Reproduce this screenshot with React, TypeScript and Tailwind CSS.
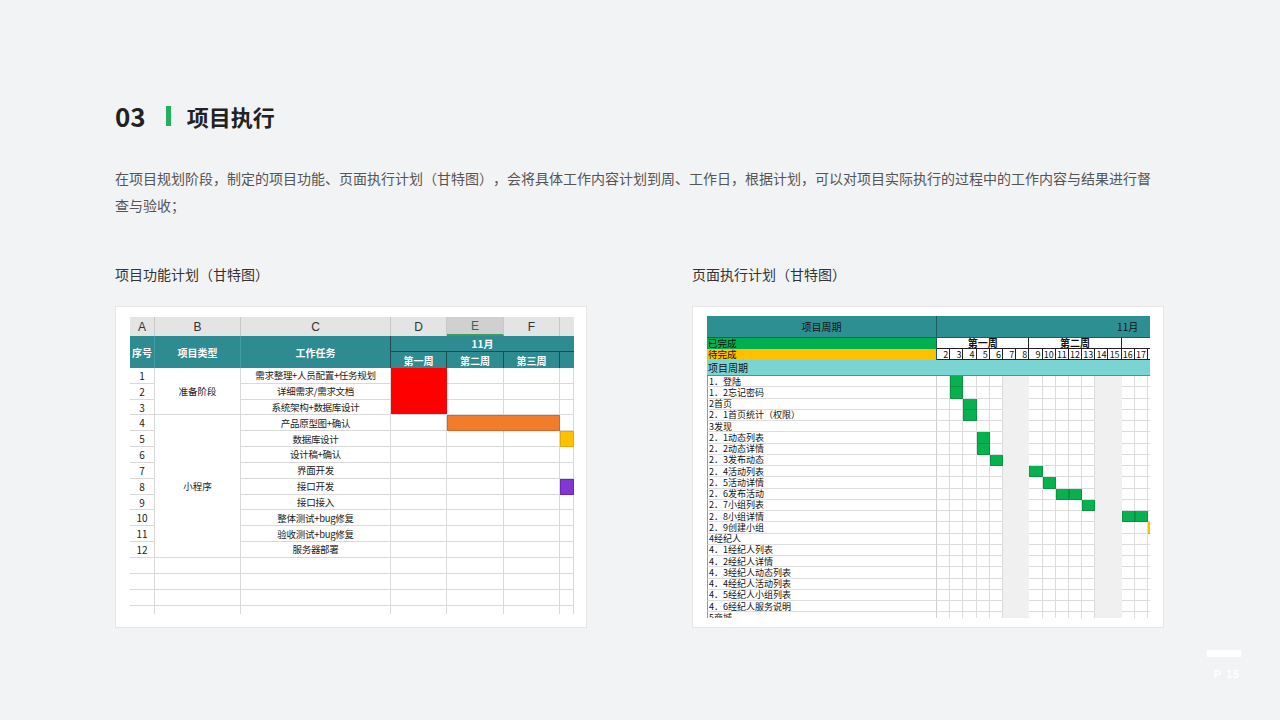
import React from 'react';

const tasks = [
  '需求整理+人员配置+任务规划',
  '详细需求/需求文档',
  '系统架构+数据库设计',
  '产品原型图+确认',
  '数据库设计',
  '设计稿+确认',
  '界面开发',
  '接口开发',
  '接口接入',
  '整体测试+bug修复',
  '验收测试+bug修复',
  '服务器部署',
];

const pages = [
  '1．登陆',
  '1．2忘记密码',
  '2首页',
  '2．1首页统计（权限）',
  '3发现',
  '2．1动态列表',
  '2．2动态详情',
  '2．3发布动态',
  '2．4活动列表',
  '2．5活动详情',
  '2．6发布活动',
  '2．7小组列表',
  '2．8小组详情',
  '2．9创建小组',
  '4经纪人',
  '4．1经纪人列表',
  '4．2经纪人详情',
  '4．3经纪人动态列表',
  '4．4经纪人活动列表',
  '4．5经纪人小组列表',
  '4．6经纪人服务说明',
  '5商城',
];

const days = [2, 3, 4, 5, 6, 7, 8, 9, 10, 11, 12, 13, 14, 15, 16, 17, 18];
const weekend = [7, 8, 14, 15];
const doneBars: Record<number, number[]> = {
  0: [3],
  1: [3],
  2: [4],
  3: [4],
  5: [5],
  6: [5],
  7: [6],
  8: [9],
  9: [10],
  10: [11, 12],
  11: [13],
  12: [16, 17],
};
const todoBars: Record<number, number[]> = { 13: [18] };

const cell = 'border-r border-b border-[#d9d9d9] bg-white';

const LeftSheet = () => {
  const rowCell = (i: number) => {
    const row = i + 1;
    const out: React.ReactNode[] = [];
    out.push(
      <div key={`a${row}`} className={`${cell} flex items-center justify-center text-[10px] text-[#222]`}>
        {row}
      </div>,
    );
    if (row === 1)
      out.push(
        <div key="b1" className={`${cell} row-span-3 flex items-center justify-center text-[9.5px] text-[#222]`}>
          准备阶段
        </div>,
      );
    if (row === 4)
      out.push(
        <div key="b4" className={`${cell} row-span-9 flex items-center justify-center text-[9.5px] text-[#222]`}>
          小程序
        </div>,
      );
    out.push(
      <div
        key={`c${row}`}
        className={`${cell} flex items-center justify-center whitespace-nowrap text-[9.5px] tracking-[-0.3px] text-[#222]`}
      >
        {tasks[i]}
      </div>,
    );
    if (row === 1) out.push(<div key="d1" className="row-span-3 border-b border-[#d9d9d9] bg-[#ff0000]" />);
    if (row > 3) out.push(<div key={`d${row}`} className={cell} />);
    if (row === 4) {
      out.push(<div key="ef4" className="col-span-2 border border-[#d8661c] bg-[#f07c2c]" />);
    } else {
      out.push(<div key={`e${row}`} className={cell} />);
      out.push(<div key={`f${row}`} className={cell} />);
    }
    if (row === 5) out.push(<div key="g5" className="border border-[#e5ab00] bg-[#ffc000]" />);
    else if (row === 8) out.push(<div key="g8" className="border border-[#6a28b4] bg-[#8236d4]" />);
    else out.push(<div key={`g${row}`} className={cell} />);
    return out;
  };

  return (
    <div className="h-[297px] w-[444px] overflow-hidden">
      <div className="grid grid-cols-[25px_86px_150px_56px_57px_56px_14px] grid-rows-[19px_16px_16px_repeat(12,15.83px)_repeat(4,16px)]">
        {['A', 'B', 'C', 'D'].map((l) => (
          <div
            key={l}
            className="flex items-center justify-center border-r border-[#c9c9c9] bg-[#e4e4e4] font-['Liberation_Sans',sans-serif] text-[12px] text-[#333]"
          >
            {l}
          </div>
        ))}
        <div className="flex items-center justify-center border-r border-b-2 border-[#c9c9c9] border-b-[#3f9b5c] bg-[#d0d0d0] font-['Liberation_Sans',sans-serif] text-[12px] text-[#217346]">
          E
        </div>
        <div className="flex items-center justify-center border-r border-[#c9c9c9] bg-[#e4e4e4] font-['Liberation_Sans',sans-serif] text-[12px] text-[#333]">
          F
        </div>
        <div className="bg-[#e4e4e4]" />

        <div className="row-span-2 flex items-center justify-center border-r border-[#3d9ea5] bg-[#2e8b92] text-[10px] font-bold text-white">
          序号
        </div>
        <div className="row-span-2 flex items-center justify-center border-r border-[#3d9ea5] bg-[#2e8b92] text-[10px] font-bold text-white">
          项目类型
        </div>
        <div className="row-span-2 flex items-center justify-center border-r border-[#1d4c50] bg-[#2e8b92] text-[10px] font-bold text-white">
          工作任务
        </div>
        <div className="col-span-4 flex items-center justify-center border-b border-[#1d4c50] bg-[#2e8b92] text-[10px] font-bold text-white">
          11月
        </div>
        {['第一周', '第二周', '第三周'].map((w) => (
          <div
            key={w}
            className="flex items-center justify-center border-r border-[#1d4c50] bg-[#2e8b92] text-[10px] font-bold text-white"
          >
            {w}
          </div>
        ))}
        <div className="bg-[#2e8b92]" />

        {tasks.map((_, i) => rowCell(i))}

        {[0, 1, 2, 3].map((r) =>
          [0, 1, 2, 3, 4, 5, 6].map((c) => <div key={`x${r}-${c}`} className={cell} />),
        )}
      </div>
    </div>
  );
};

const RightSheet = () => (
  <div className="h-[302px] w-[443px] overflow-hidden font-['Noto_Sans_CJK_SC',sans-serif] text-[#111]">
    <div className="grid w-[455px] grid-cols-[230px_repeat(17,13.2px)] grid-rows-[22px_11px_11px_16px_repeat(22,11.25px)]">
      <div className="flex items-center justify-center border-r border-b border-[#1f5c5f] bg-[#2e8f92] text-[10px]">
        项目周期
      </div>
      <div className="col-span-17 flex items-center justify-end border-b border-[#1f5c5f] bg-[#2e8f92] pr-[23px] text-[10px]">
        11月
      </div>

      <div className="flex items-center border-r border-[#1f5c5f] bg-[#00b050] pl-[1px] text-[9.5px] leading-none">已完成</div>
      <div className="col-span-7 flex items-center justify-center border-r border-b border-[#222] bg-white text-[10px] font-bold leading-none">
        第一周
      </div>
      <div className="col-span-7 flex items-center justify-center border-r border-b border-[#222] bg-white text-[10px] font-bold leading-none">
        第二周
      </div>
      <div className="col-span-3 border-b border-[#222] bg-white" />

      <div className="flex items-center border-r border-[#1f5c5f] bg-[#ffc000] pl-[1px] text-[9.5px] leading-none">待完成</div>
      {days.map((d) => (
        <div
          key={`n${d}`}
          className="flex items-center justify-end border-r border-b border-[#222] bg-white pr-[1px] text-[9px] leading-none"
        >
          {d}
        </div>
      ))}

      <div className="col-span-18 flex items-center border-b border-[#3c9c94] bg-[#7ad4d1] pl-[1px] text-[10px]">
        项目周期
      </div>

      {pages.map((p, i) => (
        <React.Fragment key={p}>
          <div className="flex items-center whitespace-nowrap border-l border-r border-b border-l-[#9a9a9a] border-r-[#cfcfcf] border-b-[#dedede] bg-white pl-[1px] text-[9px] leading-none">
            {p}
          </div>
          {days.map((d) => {
            if (doneBars[i]?.includes(d))
              return <div key={d} className="border-x border-b border-[#0c9444] bg-[#05b24e]" />;
            if (todoBars[i]?.includes(d))
              return <div key={d} className="border-b border-[#e0a800] bg-[#ffc000]" />;
            if (weekend.includes(d)) return <div key={d} className="bg-[#f0f0f0]" />;
            return <div key={d} className="border-r border-b border-[#dcdcdc] bg-white" />;
          })}
        </React.Fragment>
      ))}
    </div>
  </div>
);

export default function App() {
  return (
    <div className="relative h-[720px] w-[1280px] overflow-hidden bg-[#f2f3f5] font-['Noto_Sans_CJK_SC',sans-serif]">
      <div className="w-[1164px] pl-[115px] pt-[102px]">
        <div className="flex h-[28px] items-center">
          <span className="text-[26px] font-bold leading-none text-[#222]">03</span>
          <span className="ml-[20px] h-[20px] w-[5px] bg-[#22b25c]" />
          <span className="ml-[16px] text-[22px] font-bold leading-none text-[#222]">项目执行</span>
        </div>

        <p className="mt-[35px] w-[1046px] text-[14px] leading-[27px] text-[#555] [text-spacing-trim:space-all]">
          在项目规划阶段，制定的项目功能、页面执行计划（甘特图），会将具体工作内容计划到周、工作日，根据计划，可以对项目实际执行的过程中的工作内容与结果进行督查与验收；
        </p>

        <div className="mt-[45px] flex justify-between">
          <div>
            <h2 className="text-[14px] leading-[20px] text-[#333]">项目功能计划（甘特图）</h2>
            <div className="mt-[22px] h-[322px] w-[472px] border border-[#e6e6e6] bg-white pl-[14px] pt-[10px]">
              <LeftSheet />
            </div>
          </div>
          <div>
            <h2 className="text-[14px] leading-[20px] text-[#333]">页面执行计划（甘特图）</h2>
            <div className="mt-[22px] h-[322px] w-[472px] border border-[#e6e6e6] bg-white pl-[14px] pt-[9px]">
              <RightSheet />
            </div>
          </div>
        </div>
      </div>

      <div className="absolute right-[39px] top-[650px] flex flex-col items-center">
        <div className="h-[7px] w-[34px] bg-white" />
        <span className="ml-[6px] mt-[9px] font-['Liberation_Sans',sans-serif] text-[11px] font-bold tracking-[1px] text-white">P 15</span>
      </div>
    </div>
  );
}
